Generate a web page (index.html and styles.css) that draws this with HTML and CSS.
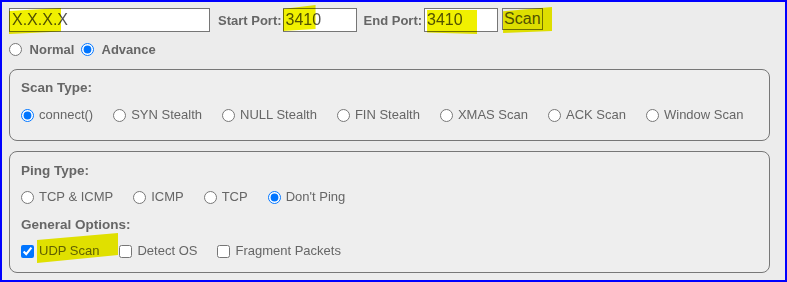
FILE: index.html
```html
<!DOCTYPE html>
<html lang="en">
<head>
    <meta charset="UTF-8">
    <meta name="viewport" content="width=device-width, initial-scale=1.0">
    <title>Port Scanner</title>
    <link rel="stylesheet" href="styles.css">
</head>
<body>
    <div class="frame">
        <div class="target-row">
            <span class="mark-wrap">
                <input class="host" type="text" value="X.X.X.X">
                <span class="marker m-host"></span>
            </span>
            <label class="port-label">Start Port:</label>
            <span class="mark-wrap">
                <input class="port" type="text" value="3410">
                <span class="marker m-start"></span>
            </span>
            <label class="port-label end">End Port:</label>
            <span class="mark-wrap">
                <input class="port" type="text" value="3410">
                <span class="marker m-end"></span>
            </span>
            <span class="mark-wrap">
                <button class="scan-btn">Scan</button>
                <span class="marker m-scan"></span>
            </span>
        </div>

        <div class="mode-row">
            <label class="mode"><input type="radio" name="mode"> Normal</label>
            <label class="mode"><input type="radio" name="mode" checked> Advance</label>
        </div>

        <div class="group scan-group">
            <div class="group-title">Scan Type:</div>
            <div class="options">
                <label class="opt"><input type="radio" name="scan" checked>connect()</label>
                <label class="opt"><input type="radio" name="scan">SYN Stealth</label>
                <label class="opt"><input type="radio" name="scan">NULL Stealth</label>
                <label class="opt"><input type="radio" name="scan">FIN Stealth</label>
                <label class="opt"><input type="radio" name="scan">XMAS Scan</label>
                <label class="opt"><input type="radio" name="scan">ACK Scan</label>
                <label class="opt"><input type="radio" name="scan">Window Scan</label>
            </div>
        </div>

        <div class="group ping-group">
            <div class="group-title">Ping Type:</div>
            <div class="options">
                <label class="opt"><input type="radio" name="ping">TCP &amp; ICMP</label>
                <label class="opt"><input type="radio" name="ping">ICMP</label>
                <label class="opt"><input type="radio" name="ping">TCP</label>
                <label class="opt"><input type="radio" name="ping" checked>Don't Ping</label>
            </div>
            <div class="group-title sub">General Options:</div>
            <div class="options">
                <label class="opt mark-wrap"><input type="checkbox" checked>UDP Scan<span class="marker m-udp"></span></label>
                <label class="opt"><input type="checkbox">Detect OS</label>
                <label class="opt"><input type="checkbox">Fragment Packets</label>
            </div>
        </div>
    </div>
</body>
</html>
```

FILE: styles.css
```css
body {
    margin: 0;
    background-color: #ececec;
    font-family: "Liberation Sans", Arial, sans-serif;
    color: #666;
}
.frame {
    width: 787px;
    height: 282px;
    box-sizing: border-box;
    border: 2px solid #0000ff;
    padding: 6px 7px;
}
.target-row {
    display: flex;
    align-items: center;
}
.mark-wrap {
    position: relative;
    display: inline-flex;
}
.marker {
    position: absolute;
    background-color: #f0f000;
    mix-blend-mode: multiply;
    pointer-events: none;
}
input[type="text"] {
    box-sizing: border-box;
    height: 24px;
    border: 1px solid #767676;
    background: #fff;
    padding: 0 2px;
    margin: 0;
    font-family: "Liberation Sans", Arial, sans-serif;
    font-size: 16px;
    color: #555;
    outline: none;
}
.host {
    width: 201px;
    padding-left: 1px;
}
.port {
    width: 74px;
}
.port-label {
    font-size: 13px;
    font-weight: bold;
    margin: 0 1px 0 8px;
}
.port-label.end {
    margin-left: 7px;
    margin-right: 2px;
}
.scan-btn {
    box-sizing: border-box;
    height: 22px;
    margin: 0 0 2px 4px;
    padding: 0 1px;
    border: 1px solid #767676;
    border-radius: 0;
    background: #ececec;
    font-family: "Liberation Sans", Arial, sans-serif;
    font-size: 16px;
    color: #555;
}
.m-host {
    left: 0;
    top: 0;
    width: 52px;
    height: 26px;
    clip-path: polygon(0 12%, 100% 0, 100% 90%, 0 100%);
}
.m-start {
    left: 0;
    top: -3px;
    width: 33px;
    height: 26px;
    clip-path: polygon(0 15%, 100% 0, 100% 92%, 0 100%);
}
.m-end {
    left: 3px;
    top: 2px;
    width: 50px;
    height: 24px;
    clip-path: polygon(0 0, 100% 0, 100% 100%, 0 94%);
}
.m-scan {
    left: 5px;
    top: -1px;
    width: 49px;
    height: 26px;
    clip-path: polygon(0 16%, 100% 0, 100% 92%, 0 100%);
}
.m-udp {
    left: 16px;
    top: -10px;
    width: 81px;
    height: 30px;
    clip-path: polygon(0 23%, 100% 0, 100% 73%, 0 100%);
}

.mode-row {
    display: flex;
    gap: 7px;
    margin-top: 9px;
    height: 16px;
    align-items: center;
}
.mode {
    display: inline-flex;
    align-items: center;
    gap: 7px;
    font-size: 13px;
    font-weight: bold;
    white-space: pre;
}
.mode input {
    margin: 0;
    width: 13px;
    height: 13px;
}
.mode-row .mode input {
    margin-right: -3px;
}

.group {
    width: 761px;
    box-sizing: border-box;
    border: 1px solid #777;
    border-radius: 8px;
    background-color: #eeeeee;
    padding: 10px 11px 17px;
    margin-top: 12px;
}
.ping-group {
    margin-top: 10px;
    padding-top: 11px;
    padding-bottom: 13px;
}
.group-title {
    font-size: 13.5px;
    font-weight: bold;
    line-height: 16px;
}
.group-title.sub {
    margin-top: 12px;
}
.options {
    display: flex;
    gap: 20px;
    height: 16px;
    align-items: center;
    margin-top: 11px;
}
.ping-group .options {
    margin-top: 10px;
}
.opt {
    display: inline-flex;
    align-items: center;
    gap: 5px;
    font-size: 13px;
    line-height: 16px;
}
.opt input {
    margin: 0;
    width: 13px;
    height: 13px;
}
```
